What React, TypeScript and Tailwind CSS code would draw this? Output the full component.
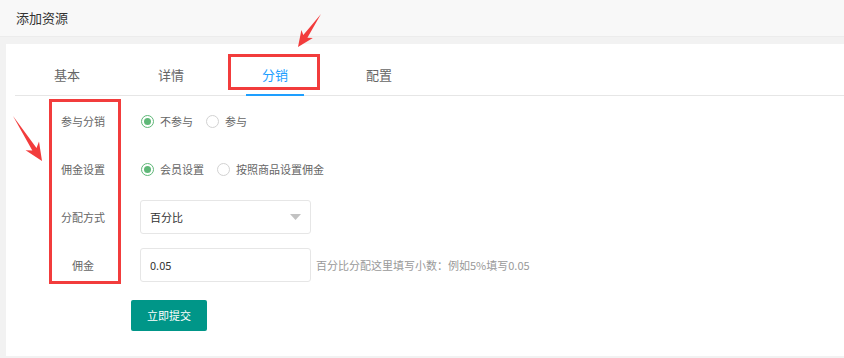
import React, { useState } from 'react';

const tabs = ['基本', '详情', '分销', '配置'];

const Radio: React.FC<{ checked: boolean; label: string; onClick: () => void }> = ({ checked, label, onClick }) => (
    <div className="flex items-center cursor-pointer" onClick={onClick}>
        <span
            className={
                'w-[13px] h-[13px] rounded-full border flex items-center justify-center ' +
                (checked ? 'border-[#5FB878]' : 'border-[#d2d2d2]')
            }
        >
            {checked && <span className="w-[7px] h-[7px] rounded-full bg-[#5FB878]" />}
        </span>
        <span className="ml-[6px] text-[11px] text-[#666]">{label}</span>
    </div>
);

const App: React.FC = () => {
    const [join, setJoin] = useState(0);
    const [mode, setMode] = useState(0);
    const [rate, setRate] = useState('0.05');

    return (
        <div
            className="relative w-full h-[358px] bg-[#f2f2f2] overflow-hidden"
            style={{ fontFamily: '"Noto Sans CJK SC", "Noto Sans", sans-serif' }}
        >
            <div className="h-[37px] bg-[#f8f8f8] border-b border-[#ececec] flex items-center pl-[16px] text-[13px] text-[#333]">
                添加资源
            </div>

            <div className="ml-[6px] mt-[7px] h-[312px] bg-white pt-[11px] pl-[9px]">
                <div className="flex h-[41px] border-b border-[#e6e6e6]">
                    {tabs.map((t, i) => (
                        <div key={t} className="relative w-[104px] flex items-center justify-center">
                            <span className={'text-[13px] ' + (i === 2 ? 'text-[#1E9FFF]' : 'text-[#666]')}>{t}</span>
                            {i === 2 && (
                                <span className="absolute left-[23px] right-[23px] bottom-[-1px] h-[2px] bg-[#1E9FFF]" />
                            )}
                        </div>
                    ))}
                </div>

                <div className="mt-[8px] pl-[41px] flex flex-col gap-[14px]">
                    <div className="flex items-center h-[34px]">
                        <div className="w-[54px] text-center text-[11px] text-[#666]">参与分销</div>
                        <div className="ml-[31px] flex items-center gap-[13px]">
                            <Radio checked={join === 0} label="不参与" onClick={() => setJoin(0)} />
                            <Radio checked={join === 1} label="参与" onClick={() => setJoin(1)} />
                        </div>
                    </div>
                    <div className="flex items-center h-[34px]">
                        <div className="w-[54px] text-center text-[11px] text-[#666]">佣金设置</div>
                        <div className="ml-[31px] flex items-center gap-[13px]">
                            <Radio checked={mode === 0} label="会员设置" onClick={() => setMode(0)} />
                            <Radio checked={mode === 1} label="按照商品设置佣金" onClick={() => setMode(1)} />
                        </div>
                    </div>
                    <div className="flex items-center h-[34px]">
                        <div className="w-[54px] text-center text-[11px] text-[#666]">分配方式</div>
                        <div className="ml-[30px] w-[171px] h-[34px] border border-[#e6e6e6] rounded-[3px] flex items-center justify-between pl-[9px] pr-[9px]">
                            <span className="text-[11px] text-[#333]">百分比</span>
                            <svg width="11" height="6" viewBox="0 0 11 6">
                                <polygon points="0,0 11,0 5.5,6" fill="#c2c2c2" />
                            </svg>
                        </div>
                    </div>
                    <div className="flex items-center h-[34px]">
                        <div className="w-[54px] text-center text-[11px] text-[#666]">佣金</div>
                        <input
                            value={rate}
                            onChange={e => setRate(e.target.value)}
                            className="ml-[30px] w-[171px] h-[34px] border border-[#e6e6e6] rounded-[3px] pl-[9px] text-[11px] text-[#333] outline-none"
                        />
                        <span className="ml-[5px] text-[11px] text-[#999]">百分比分配这里填写小数：例如5%填写0.05</span>
                    </div>
                </div>

                <button className="ml-[116px] mt-[18px] w-[76px] h-[31px] bg-[#009688] rounded-[2px] text-white text-[11px]">
                    立即提交
                </button>
            </div>

            {/* annotations */}
            <div className="absolute left-[228px] top-[54px] w-[92px] h-[36px] border-[3px] border-[#f23c3c] pointer-events-none" />
            <div className="absolute left-[49px] top-[99px] w-[72px] h-[185px] border-[3px] border-[#f23c3c] pointer-events-none" />
            <svg className="absolute inset-0 pointer-events-none" width="844" height="358">
                <polygon
                    points="321,14 307.4,37.7 312.8,37.9 298,47 301.4,29.9 303.3,34.9"
                    fill="#f23c3c"
                />
                <polygon
                    points="13,116 36.5,147.9 39,141.6 42,161 25.6,150.2 32.3,150.5"
                    fill="#f23c3c"
                />
            </svg>
        </div>
    );
};

export default App;
